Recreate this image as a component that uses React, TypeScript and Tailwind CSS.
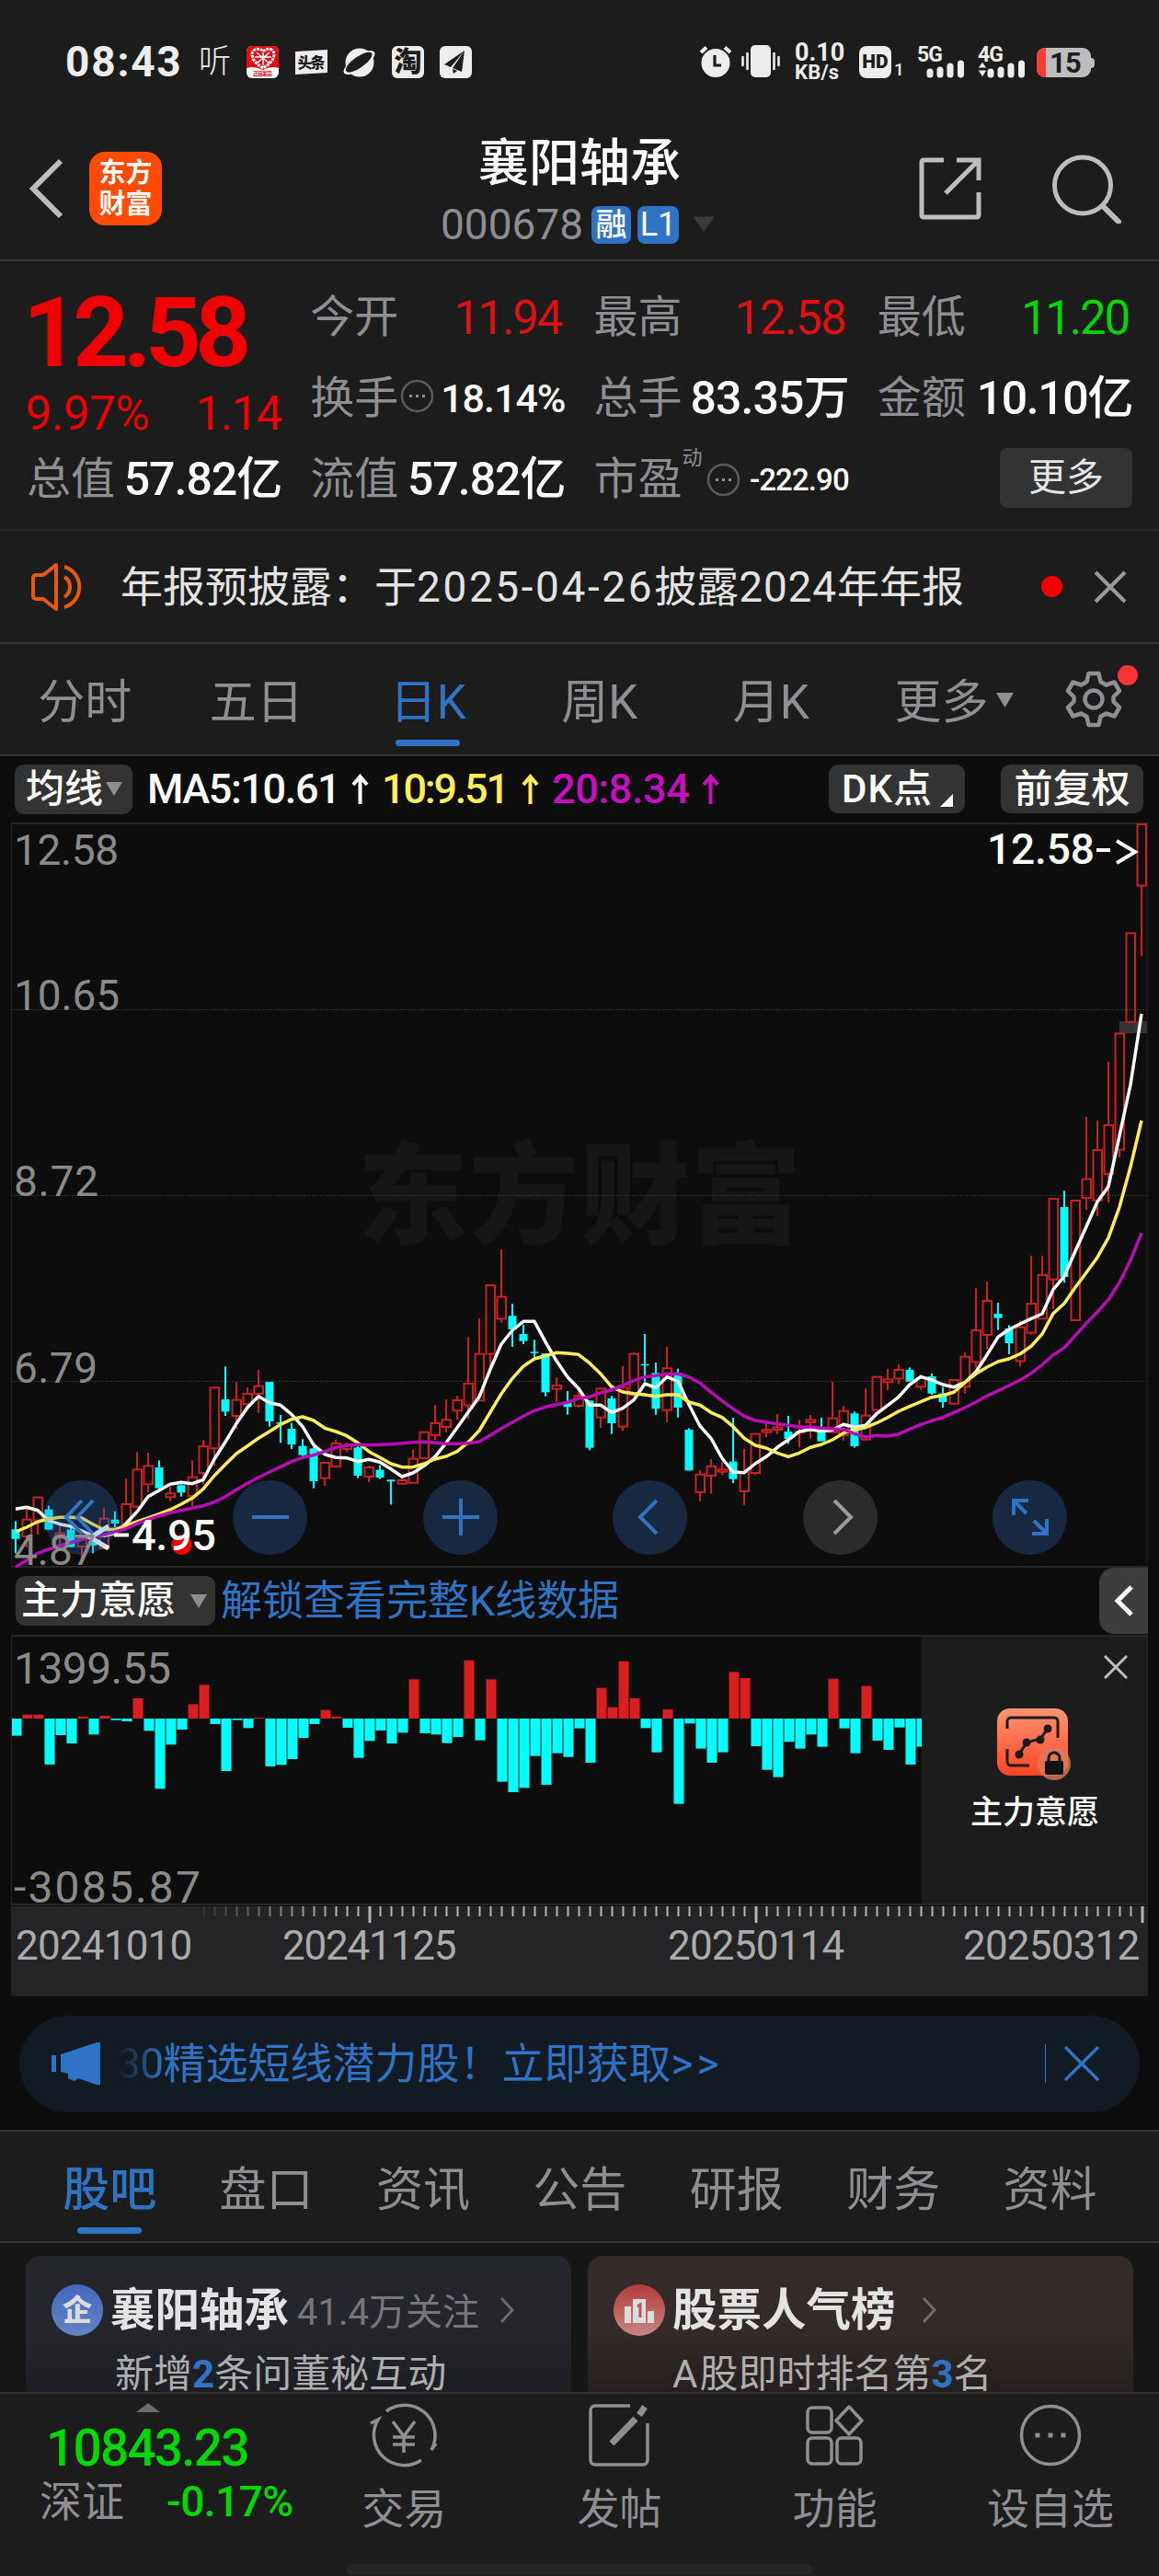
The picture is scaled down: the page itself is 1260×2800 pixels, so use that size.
import type { ReactNode } from "react";
import { clsx } from "clsx";

type Candle = [up: 0 | 1, top: number, bottom: number, high: number, low: number];

const STEP = 12;
const FIRST_X = 17;

// Candles and averages are stored in thirds of a pixel, measured from the 8.72 line
const toY = (v: number) => 406 + v / 3;
const toX = (i: number) => FIRST_X + i * STEP;

const candles: Candle[] = [
	[0, 1087, 1118, 1060, 1165], [1, 1055, 1110, 1015, 1145], [1, 983, 1058, 983, 1105], [0, 1022, 1088, 1010, 1088],
	[1, 1100, 1115, 1078, 1145], [0, 1088, 1145, 1080, 1145], [1, 1115, 1143, 1105, 1185], [0, 1128, 1140, 1115, 1165],
	[1, 1052, 1148, 1018, 1148], [0, 1055, 1068, 1028, 1080], [1, 1005, 1072, 922, 1072], [1, 892, 1013, 835, 1015],
	[1, 880, 940, 838, 965], [0, 885, 953, 862, 955], [1, 970, 982, 948, 995], [0, 943, 967, 940, 980],
	[1, 917, 978, 862, 1013], [1, 816, 903, 796, 940], [1, 625, 823, 622, 880], [0, 663, 703, 556, 717],
	[1, 665, 717, 607, 760], [1, 645, 678, 624, 700], [1, 620, 645, 567, 707], [0, 606, 735, 606, 752],
	[0, 738, 741, 714, 805], [0, 759, 810, 740, 825], [0, 815, 845, 793, 850], [0, 823, 930, 818, 953],
	[1, 870, 920, 870, 945], [1, 807, 882, 795, 885], [1, 812, 825, 805, 835], [0, 820, 912, 815, 920],
	[1, 885, 915, 880, 933], [0, 893, 918, 878, 923], [0, 925, 931, 925, 1006], [1, 927, 938, 910, 938],
	[1, 857, 935, 828, 937], [1, 770, 855, 770, 855], [1, 741, 780, 682, 795], [1, 730, 753, 663, 770],
	[1, 666, 700, 652, 730], [1, 612, 682, 460, 727], [1, 515, 667, 400, 667], [1, 291, 515, 290, 560],
	[1, 329, 400, 173, 413], [0, 391, 435, 352, 492], [0, 450, 473, 420, 483], [0, 508, 511, 469, 525],
	[0, 513, 640, 513, 653], [1, 618, 629, 592, 672], [0, 675, 688, 636, 713], [1, 651, 684, 640, 690],
	[0, 667, 821, 667, 829], [1, 628, 722, 628, 756], [0, 660, 741, 652, 776], [1, 625, 752, 554, 766],
	[1, 515, 650, 511, 650], [0, 548, 551, 450, 605], [0, 577, 694, 543, 713], [1, 562, 698, 491, 738],
	[0, 577, 690, 563, 722], [0, 762, 895, 757, 895], [1, 908, 966, 895, 995], [1, 882, 912, 858, 971],
	[1, 892, 899, 868, 910], [0, 866, 923, 723, 936], [1, 900, 963, 825, 1008], [1, 776, 903, 776, 910],
	[1, 763, 770, 742, 787], [1, 755, 762, 711, 776], [0, 768, 792, 717, 808], [1, 768, 772, 730, 820],
	[1, 730, 738, 714, 791], [0, 770, 800, 723, 800], [1, 725, 770, 607, 770], [1, 701, 780, 684, 797],
	[0, 709, 816, 703, 821], [1, 716, 794, 627, 794], [1, 590, 698, 590, 698], [1, 598, 607, 563, 634],
	[1, 567, 595, 550, 613], [0, 567, 605, 559, 605], [1, 595, 622, 583, 632], [0, 588, 644, 579, 648],
	[0, 644, 672, 622, 690], [1, 600, 677, 600, 677], [1, 524, 622, 510, 644], [1, 438, 541, 301, 560],
	[1, 342, 453, 280, 500], [0, 384, 398, 348, 437], [0, 432, 480, 421, 516], [1, 428, 538, 406, 556],
	[1, 351, 446, 195, 452], [1, 258, 400, 195, 400], [1, 9, 272, 9, 368], [0, 36, 264, -17, 283],
	[1, 15, 405, 15, 405], [1, -55, 6, -258, 46], [1, -150, 14, -246, 66], [1, -231, -72, -438, 22],
	[1, -530, -151, -530, -126], [1, -857, -568, -857, -568], [1, -1212, -1012, -1212, -782],
];

const ma5 = [
	1021, 1015, 1025, 1058, 1070, 1077, 1092, 1107, 1108, 1100, 1068, 1030, 980, 960, 940, 934, 938, 925, 858, 802,
	742, 690, 653, 674, 682, 712, 752, 812, 842, 853, 854, 866, 859, 868, 890, 915, 903, 880, 850, 805,
	755, 705, 655, 565, 483, 438, 409, 409, 476, 538, 590, 628, 682, 682, 706, 692, 665, 612, 625, 590,
	604, 680, 750, 790, 855, 900, 902, 873, 850, 820, 795, 768, 761, 767, 763, 745, 754, 748, 710, 683,
	655, 615, 589, 600, 615, 623, 608, 573, 518, 460, 435, 417, 400, 384, 305, 262, 180, 100, 19, -31,
	-196, -363, -594,
];

const ma10 = [
	1095, 1080, 1062, 1053, 1048, 1048, 1050, 1070, 1088, 1087, 1075, 1062, 1050, 1037, 1023, 1005, 985, 955, 912, 875,
	840, 815, 790, 768, 745, 728, 720, 732, 757, 768, 782, 805, 833, 853, 873, 884, 884, 873, 858, 849,
	833, 803, 765, 705, 645, 595, 555, 531, 521, 511, 513, 517, 545, 580, 622, 639, 644, 648, 653, 648,
	648, 672, 682, 706, 722, 752, 790, 813, 822, 838, 850, 838, 820, 810, 795, 773, 762, 755, 740, 722,
	702, 686, 671, 656, 650, 640, 608, 580, 558, 540, 531, 515, 490, 450, 383, 350, 298, 250, 200, 136,
	36, -95, -246,
];

const ma20 = [
	1210, 1188, 1165, 1152, 1140, 1130, 1120, 1112, 1105, 1095, 1085, 1068, 1055, 1043, 1033, 1025, 1018, 1010, 998, 980,
	958, 937, 918, 900, 883, 866, 853, 845, 833, 820, 813, 811, 812, 811, 809, 806, 803, 802, 805, 808,
	808, 806, 801, 780, 758, 738, 718, 700, 688, 680, 673, 660, 655, 642, 632, 618, 602, 590, 586, 580,
	580, 590, 610, 640, 668, 694, 718, 732, 737, 743, 747, 754, 752, 757, 759, 761, 775, 786, 781, 783,
	776, 760, 745, 733, 722, 706, 690, 672, 652, 635, 618, 600, 578, 550, 518, 495, 455, 415, 378, 338,
	282, 209, 121,
];

const flows = [
	-56, 13, 13, -150, -54, -81, 6, -52, 9, -5, -9, 66, -40, -229, -85, -36, 47, 110, -18, -171,
	-5, -31, 3, -156, -151, -132, -63, -18, 28, 6, -30, -128, -73, -39, -81, -46, 128, -48, -52, -80,
	-60, 190, -71, 128, -206, -240, -226, -122, -216, -113, -125, -32, -144, 100, 37, 187, 66, -31, -110, 30,
	-278, -16, -98, -144, -110, 152, 132, -90, -167, -191, -76, -98, -52, -92, 130, -32, -113, 106, -72, -102,
	-29, -150, -92,
];

const line = (values: number[]) => values.map((v, i) => `${toX(i)},${toY(v).toFixed(1)}`).join(" ");

function StatusBar() {
	return (
		<div className="flex h-[134px] items-center pl-[71px] pr-[70px] text-[#ededed]">
			<span className="w-[145px] text-[46px] leading-none font-bold tracking-[1.8px]">08:43</span>
			<span className="w-[52px] text-[35px] leading-none font-light">听</span>
			<svg width="35" height="35" viewBox="0 0 35 35" className="mr-[18px]">
				<rect width="35" height="35" rx="6" fill="#fff" />
				<path d="M0 24V6a6 6 0 0 1 6-6h23a6 6 0 0 1 6 6v18q-8-3-17.5 2Q8 21 0 24z" fill="#e60a14" />
				<path d="M18 24C10 19 6 14 6 9c0-6 8-8 12-3 4-5 12-3 12 3 0 5-4 10-12 15z" fill="none" stroke="#fff" strokeWidth="3" strokeDasharray="3 1" />
				<path d="M11 7l14 12M25 7L11 19M18 7v14M9 12h18" stroke="#fff" strokeWidth="1.6" />
				<text x="7" y="32" fontSize="6" fontWeight="700" fill="#e60a14" textLength="21">正品发货</text>
			</svg>
			<svg width="35" height="35" viewBox="0 0 35 35" className="mr-[17px]">
				<path d="M0 6l35-2v25L0 31z" fill="#ededed" />
				<text x="2.5" y="23.5" fontSize="16" fontWeight="900" fill="#1c1c1c" textLength="30">头条</text>
			</svg>
			<svg width="35" height="35" viewBox="0 0 35 35" className="mr-[18px]">
				<circle cx="18" cy="18" r="15.5" fill="#ededed" />
				<ellipse cx="17.500" cy="18" rx="20" ry="7.500" fill="#ededed" transform="rotate(-35 17.5 18)" />
				<ellipse cx="17.500" cy="17.500" rx="17" ry="6" fill="#1c1c1c" transform="rotate(-35 17.5 18)" />
			</svg>
			<span className="mr-[17px] flex size-[35px] items-center justify-center rounded-md bg-[#ededed] text-[30px] leading-none font-black text-[#1c1c1c]">淘</span>
			<svg width="35" height="35" viewBox="0 0 35 35">
				<rect width="35" height="35" rx="6" fill="#ededed" />
				<path d="M27 5L5 20l7 3zM27 5L14 24l10 4zM14 25l1 5 4-3z" fill="#1c1c1c" />
			</svg>
			<div className="ml-auto flex items-center">
				<svg width="36" height="36" viewBox="0 0 36 36" className="mr-[10px]">
					<circle cx="18" cy="19.500" r="15.500" fill="#ededed" />
					<path d="M2 8l6-5.500M34 8l-6-5.500" stroke="#ededed" strokeWidth="4" />
					<path d="M17 11v11h7" fill="none" stroke="#1c1c1c" strokeWidth="3.200" />
				</svg>
				<svg width="42" height="36" viewBox="0 0 42 36" className="mr-[16px]">
					<rect x="10" width="22" height="35" rx="5" fill="#ededed" />
					<path d="M1.500 13v9M6.500 9v17M35.500 9v17M40.500 13v9" stroke="#ededed" strokeWidth="2.600" strokeLinecap="round" />
				</svg>
				<div className="w-[70px] font-bold">
					<div className="text-[27px] leading-[22px]">0.10</div>
					<div className="text-[22px] leading-[21px] tracking-[0.2px]">KB/s</div>
				</div>
				<span className="flex h-[35px] w-[35px] items-center justify-center rounded-lg bg-[#ededed] text-[21px] leading-none font-black text-[#1c1c1c]">HD</span>
				<span className="mt-4 w-[28px] pl-[3px] text-[19px] leading-none font-medium">1</span>
				<Signal label="5G" />
				<Signal label="4G" arrows />
				<div className="flex items-center">
					<div className="mt-[2px] flex h-8 w-[59px] items-center rounded-[9px] bg-[#bdbdbd]">
						<div className="h-full w-[10px] rounded-l-[9px] bg-[#ff3b2f]" />
						<span className="pl-[4px] text-[31px] leading-none font-bold tracking-tight text-[#1c1c1c]">15</span>
					</div>
					<div className="mt-[2px] h-[11px] w-[4px] rounded-r bg-[#bdbdbd]" />
				</div>
			</div>
		</div>
	);
}

function Signal({ label, arrows }: { label: string; arrows?: boolean }) {
	return (
		<svg width="53" height="36" viewBox="0 0 53 36" className={clsx("overflow-visible", arrows ? "mr-[11px]" : "mr-[13px]")}>
			<text x="0" y="17.500" fontSize="23" fontWeight="700" fill="#ededed" textLength="28">{label}</text>
			<path d="M14 29v3M25 27v5M36 23v9M47.500 20v12" stroke="#ededed" strokeWidth="7" strokeLinecap="round" />
			{arrows && <path d="M0 25l5-7 5 7zM0 27h10l-5 8z" fill="#ededed" stroke="#1c1c1c" strokeWidth="1" />}
		</svg>
	);
}

function Header() {
	return (
		<header className="flex h-[150px] border-b-2 border-[#333] pl-[31px]">
			<svg width="40" height="68" viewBox="0 0 40 68" className="mt-[37px]">
				<path d="M35 4L5 34l30 30" fill="none" stroke="#bdbdbd" strokeWidth="6" />
			</svg>
			<div className="mt-[31px] ml-[26px] flex h-[80px] w-[79px] flex-col items-center justify-center rounded-[17px] bg-[#ff4a00] text-[29px] leading-[34px] font-bold text-white">
				<span>东方</span>
				<span>财富</span>
			</div>
			<div className="ml-[303px] flex w-[302px] flex-col">
				<h1 className="mt-[16px] self-center text-[55px] leading-none font-medium text-white">襄阳轴承</h1>
				<div className="mt-[18px] flex h-[42px] items-center">
					<span className="w-[164px] text-[46px] leading-none text-[#8e8e93]">000678</span>
					<span className="mr-[7px] flex h-[41px] w-[43px] items-center justify-center rounded-lg bg-[#2f74c4] text-[34px] leading-none font-medium text-white">融</span>
					<span className="flex h-[41px] w-[45px] items-center justify-center rounded-lg bg-[#2f74c4] text-[36px] leading-none text-white">L1</span>
					<svg width="26" height="18" viewBox="0 0 26 18" className="ml-[14px]">
						<path d="M2 1h22L13 16z" fill="#3a3a3a" stroke="#3a3a3a" strokeLinejoin="round" />
					</svg>
				</div>
			</div>
			<svg width="68" height="68" viewBox="0 0 68 68" className="mt-[37px] ml-[218px]" fill="none" stroke="#bdbdbd" strokeWidth="5">
				<path d="M27 3H5a2 2 0 0 0-2 2v58a2 2 0 0 0 2 2h58a2 2 0 0 0 2-2V38M41 3h24v22M65 3L29 39" />
			</svg>
			<svg width="76" height="76" viewBox="0 0 76 76" className="mt-[33px] ml-[77px]" fill="none" stroke="#bdbdbd" strokeWidth="5">
				<circle cx="33" cy="34.500" r="30.500" />
				<path d="M55 57l17 17" strokeWidth="6" strokeLinecap="round" />
			</svg>
		</header>
	);
}

function Hint({ className }: { className?: string }) {
	return (
		<svg width="37" height="37" viewBox="0 0 37 37" className={className}>
			<circle cx="18.500" cy="18.500" r="16.500" fill="none" stroke="#5c5c60" strokeWidth="2.500" />
			<path d="M10 18.500h3M17 18.500h3M24 18.500h3" stroke="#8e8e93" strokeWidth="3" />
		</svg>
	);
}

function Stat({ label, hint, children, className }: { label: string; hint?: ReactNode; children: ReactNode; className?: string }) {
	return (
		<div className="flex h-[88px] items-center whitespace-nowrap">
			<span className="text-[48px] leading-none text-[#8e8e93]">{label}</span>
			{hint}
			<span className={clsx("ml-auto leading-none", className)}>{children}</span>
		</div>
	);
}

function Quote() {
	return (
		<section className="grid h-[293px] auto-rows-[88px] grid-cols-4 content-start gap-x-[31px] border-b-2 border-[#262626] px-[29px] pt-[17px]">
			<div className="row-span-2 flex h-[176px] flex-col whitespace-nowrap text-[#f00000]">
				<span className="mt-[8px] ml-[-4px] text-[106px] leading-none font-bold tracking-[-6.5px]">12.58</span>
				<div className="mt-[9px] ml-[-1px] flex justify-between text-[51px] leading-none tracking-[-0.4px]">
					<span>9.97%</span>
					<span className="tracking-[-1.5px]">1.14</span>
				</div>
			</div>
			<Stat label="今开" className="pr-[4px] text-[51px] tracking-[-2.2px] text-[#e01010]">11.94</Stat>
			<Stat label="最高" className="pr-[3px] text-[51px] tracking-[-1.4px] text-[#e01010]">12.58</Stat>
			<Stat label="最低" className="pr-[4px] text-[51px] tracking-[-2.2px] text-[#00d800]">11.20</Stat>
			<Stat label="换手" hint={<Hint className="mb-[6px] ml-[2px]" />} className="text-[43px] font-medium tracking-[-1px] text-white">18.14%</Stat>
			<Stat label="总手" className="text-[50px] font-medium tracking-[-0.9px] text-white">83.35万</Stat>
			<Stat label="金额" className="text-[50px] font-medium tracking-[-1.4px] text-white">10.10亿</Stat>
			<Stat label="总值" className="text-[50px] font-medium tracking-[-1px] text-white">57.82亿</Stat>
			<Stat label="流值" className="text-[50px] font-medium tracking-[-1px] text-white">57.82亿</Stat>
			<Stat
				label="市盈"
				hint={
					<>
						<span className="mb-[46px] text-[22px] leading-none text-[#8e8e93]">动</span>
						<Hint className="ml-[4px]" />
					</>
				}
				className="text-[33px] font-medium tracking-[-0.9px] text-white"
			>
				-222.90
			</Stat>
			<div className="flex h-[88px] items-center justify-end">
				<button className="mt-[-4px] h-[65px] w-[144px] rounded-lg bg-[#333] text-[41px] leading-none text-[#e6e6e6]">更多</button>
			</div>
		</section>
	);
}

function Notice() {
	return (
		<section className="flex h-[123px] items-center border-b-2 border-[#333] pl-[33px]">
			<svg width="64" height="54" viewBox="0 0 64 54" className="mr-[34px]" fill="none" stroke="#e8590c" strokeWidth="4">
				<path d="M28 3v48L14 40H6a3 3 0 0 1-3-3V17a3 3 0 0 1 3-3h8z" strokeLinejoin="round" />
				<path d="M37 16a13 13 0 0 1 0 22M37 5a23 23 0 0 1 0 44" />
			</svg>
			<span className="w-[1001px] text-[46px] leading-none whitespace-nowrap text-[#e3e3e3]">
				年报预披露：于<span className="tracking-[2.6px]">2025-04-26</span>披露<span className="tracking-[0.8px]">2024</span>年年报
			</span>
			<span className="size-[23px] rounded-full bg-[#f00000]" />
			<svg width="36" height="36" viewBox="0 0 36 36" className="ml-[34px]">
				<path d="M2 2l32 32M34 2L2 34" stroke="#9a9a9a" strokeWidth="4" />
			</svg>
		</section>
	);
}

function PeriodTabs() {
	const tabs = ["分时", "五日", "日K", "周K", "月K"];
	return (
		<nav className="flex h-[122px] border-b-2 border-[#333]">
			{tabs.map((tab) => (
				<div
					key={tab}
					className={clsx("flex w-[186.500px] flex-col items-center pt-[38px] text-[51px] leading-none", tab === "日K" ? "text-[#2f74c4]" : "text-[#8e8e93]")}
				>
					<span className="mr-[2px]">{tab}</span>
					{tab === "日K" && <span className="mt-[15px] mr-[3px] h-[7px] w-[70px] rounded-full bg-[#2f74c4]" />}
				</div>
			))}
			<div className="flex w-[224px] items-start pt-[38px] pl-[40px] text-[51px] leading-none whitespace-nowrap text-[#8e8e93]">
				更多
				<svg width="19" height="16" viewBox="0 0 19 16" className="mt-[15px] ml-[8px]">
					<path d="M0 0h19L9.500 16z" fill="#8e8e93" />
				</svg>
			</div>
			<div className="relative mt-[28px] h-[64px] w-[64px]">
				<svg width="64" height="64" viewBox="0 0 64 64" fill="none" stroke="#8e8e93" strokeWidth="4.500" strokeLinejoin="round">
					<path d="M26.500 4h11l2 9 6 3.500 9-3 5.500 9.500-6.500 6.500v5l6.500 6.500-5.500 9.500-9-3-6 3.500-2 9h-11l-2-9-6-3.500-9 3L4 41l6.500-6.500v-5L4 23l5.500-9.500 9 3 6-3.500z" />
					<circle cx="32" cy="32" r="9.500" />
				</svg>
				<span className="absolute top-[-5px] left-[58px] size-[22px] rounded-full bg-[#fa3434]" />
			</div>
		</nav>
	);
}

function Rise({ color }: { color: string }) {
	return (
		<svg width="19" height="34" viewBox="0 0 19 34" fill="none" stroke={color} strokeWidth="4">
			<path d="M9.500 33V4M2 12l7.500-9 7.500 9" />
		</svg>
	);
}

function Averages() {
	return (
		<div className="flex h-[72px] items-center pl-[16px] text-[45px] leading-none whitespace-nowrap">
			<div className="flex h-[54px] w-[128px] items-center rounded-[10px] bg-[#333] pl-[12px] text-[42px] font-medium text-white">
				均线
				<svg width="18" height="15" viewBox="0 0 18 15" className="ml-[3px]">
					<path d="M0 0h18L9 15z" fill="#8e8e93" />
				</svg>
			</div>
			<span className="ml-[16px] w-[222px] font-medium tracking-[-1.4px] text-white">MA5:10.61</span>
			<Rise color="#fff" />
			<span className="ml-[14px] w-[152px] font-medium tracking-[-2.2px] text-[#ffee58]">10:9.51</span>
			<Rise color="#ffee58" />
			<span className="ml-[14px] w-[163px] font-medium tracking-[-0.4px] text-[#c80fc0]">20:8.34</span>
			<Rise color="#c80fc0" />
			<div className="ml-[119px] flex h-[53px] w-[148px] items-center rounded-[10px] bg-[#333] pl-[14px] text-[42px] font-medium text-white">
				<span className="tracking-[1px]">DK点</span>
				<svg width="14" height="14" viewBox="0 0 14 14" className="mt-[24px] ml-[8px]">
					<path d="M14 0v14H0z" fill="#fff" />
				</svg>
			</div>
			<div className="ml-[39px] flex h-[53px] w-[155px] items-center justify-center rounded-[10px] bg-[#333] text-[42px] font-medium text-white">前复权</div>
		</div>
	);
}

function RoundButton({ muted, className, children }: { muted?: boolean; className?: string; children: ReactNode }) {
	return (
		<button className={clsx("flex size-[81px] items-center justify-center rounded-full", muted ? "bg-[#2b2b2b]" : "bg-[#2f74c4]/28", className)}>
			<svg width="48" height="48" viewBox="0 0 48 48" fill="none" stroke={muted ? "#9a9a9a" : "#2f74c4"} strokeWidth="4">
				{children}
			</svg>
		</button>
	);
}

function KLine() {
	const labels = [
		{ text: "12.58", y: 46, w: 114 },
		{ text: "10.65", y: 204, w: 115 },
		{ text: "8.72", y: 406, w: 92 },
		{ text: "6.79", y: 609, w: 91 },
	];
	return (
		<div className="relative h-[810px]">
			<svg width="1260" height="810" viewBox="0 0 1260 810" className="block">
				<text x="389" y="449" fontSize="120" fontWeight="900" fill="#161616" textLength="482">东方财富</text>
				<path d="M12.500 1v808M1247 1v808" stroke="#222" />
				<path d="M12 1h1236M12 809h1236" stroke="#262626" strokeWidth="2" />
				<path d="M12 203.500h1236M12 405.500h1236M12 607.500h1236" stroke="#303030" strokeDasharray="2 1" />
				<rect x="1217" y="216" width="30" height="13" fill="#333" />
				{candles.map(([up, top, bottom, high, low], i) => {
					const x = toX(i);
					const y = toY(top);
					const h = (bottom - top) / 3;
					if (!up) {
						return (
							<g key={i} fill="#00ffff">
								<rect x={x - 1} y={toY(high)} width="2" height={(low - high) / 3} />
								<rect x={x - 4.5} y={y} width="9" height={Math.max(h, 1.5)} />
							</g>
						);
					}
					return (
						<g key={i} stroke="#cc1f1f" strokeWidth="2" fill="none">
							{high < top && <path d={`M${x} ${toY(high)}V${y}`} />}
							{low > bottom && <path d={`M${x} ${toY(bottom)}V${toY(low)}`} />}
							<rect x={x - 4.5} y={y} width="9.500" height={h} />
						</g>
					);
				})}
				<polyline points={line(ma5)} fill="none" stroke="#fff" strokeWidth="3.500" strokeLinejoin="round" />
				<polyline points={line(ma10)} fill="none" stroke="#ffee58" strokeWidth="3.500" strokeLinejoin="round" />
				<polyline points={line(ma20)} fill="none" stroke="#b80cb4" strokeWidth="3.500" strokeLinejoin="round" />
				<circle cx="197.500" cy="785" r="11" fill="#f00000" />
				<path d="M118 765l-20 12 20 12" fill="none" stroke="#fff" strokeWidth="5" />
				<path d="M124 774.500h16" stroke="#fff" strokeWidth="4" />
				<text x="143" y="791" fontSize="47" fontWeight="500" fill="#fff" textLength="92">4.95</text>
				<text x="1073" y="45" fontSize="46" fontWeight="500" fill="#fff" textLength="117">12.58</text>
				<path d="M1192 30h15M1214 20l20 12-20 12" fill="none" stroke="#fff" strokeWidth="4" />
				{labels.map((label) => (
					<text key={label.text} x="15" y={label.y} fontSize="46" fill="#8a8a8a" textLength={label.w}>{label.text}</text>
				))}
			</svg>
			<div className="absolute top-[715px] left-[48px] flex">
				<RoundButton><path d="M24 6L7 24l17 18M36 6L19 24l17 18" /></RoundButton>
				<RoundButton className="ml-[124px]"><path d="M4 24h40" /></RoundButton>
				<RoundButton className="ml-[126px]"><path d="M4 24h40M24 4v40" /></RoundButton>
				<RoundButton className="ml-[125px]"><path d="M31 6L13 24l18 18" /></RoundButton>
				<RoundButton muted className="ml-[126px]"><path d="M17 6l18 18-18 18" /></RoundButton>
				<RoundButton className="ml-[125px]"><path d="M6 22V6h16M6 6l14 14M42 26v16H26M42 42L28 28" /></RoundButton>
			</div>
			<span className="absolute top-[768px] left-[15px] text-[46px] leading-none text-[#8a8a8a]">4.87</span>
		</div>
	);
}

function IndicatorBar() {
	return (
		<div className="flex h-[73px] items-center pl-[17px]">
			<div className="flex h-[54px] w-[217px] items-center rounded-[10px] bg-[#333] pl-[6px] text-[42px] leading-none font-medium whitespace-nowrap text-white">
				主力意愿
				<svg width="18" height="15" viewBox="0 0 18 15" className="ml-[16px]">
					<path d="M0 0h18L9 15z" fill="#8e8e93" />
				</svg>
			</div>
			<span className="ml-[6px] text-[45px] leading-none text-[#2f74c4]">解锁查看完整K线数据</span>
			<button className="mr-[12px] ml-auto flex h-[72px] w-[53px] items-center justify-center rounded-l-[16px] bg-[#3d3d3d]">
				<svg width="22" height="36" viewBox="0 0 22 36">
					<path d="M19 3L4 18l15 15" fill="none" stroke="#fff" strokeWidth="5" />
				</svg>
			</button>
		</div>
	);
}

function Intent() {
	return (
		<div className="mx-[12px] flex h-[294px] border-x border-t-2 border-b-2 border-[#262626]">
			<svg width="989" height="290" viewBox="13 1779 989 290" className="block">
				{flows.map((v, i) => (
					<rect
						key={i}
						x={12.5 + i * STEP}
						y={v > 0 ? 1868 - v / 3 : 1868}
						width="11"
						height={Math.max(Math.abs(v) / 3, 1)}
						fill={v > 0 ? "#d81e1e" : "#00ffff"}
					/>
				))}
				<text x="15" y="1830" fontSize="48" fill="#8a8a8a" textLength="171">1399.55</text>
				<text x="15" y="2068" fontSize="48" fill="#8a8a8a" textLength="203">-3085.87</text>
			</svg>
			<div className="relative flex w-[245px] flex-col items-center bg-[#1c1c1c] pt-[78px] pl-[1px]">
				<svg width="26" height="26" viewBox="0 0 26 26" className="absolute top-[20px] right-[21px]">
					<path d="M1 1l24 24M25 1L1 25" stroke="#bdbdbd" strokeWidth="3" />
				</svg>
				<svg width="82" height="78" viewBox="0 0 82 78">
					<defs>
						<linearGradient id="tile" x1="0" y1="0" x2="0" y2="1">
							<stop offset="0" stopColor="#ff9470" />
							<stop offset="1" stopColor="#ff4526" />
						</linearGradient>
					</defs>
					<rect width="77" height="73" rx="14" fill="url(#tile)" />
					<path d="M11 22v-8a4 4 0 0 1 4-4h47a4 4 0 0 1 4 4v18M11 44v14a4 4 0 0 0 4 4h20" fill="none" stroke="#1c1c1c" strokeWidth="3" />
					<path d="M24 50l8-13 15-4 8-11" fill="none" stroke="#1c1c1c" strokeWidth="3" />
					<g fill="#1c1c1c">
						<circle cx="24" cy="50" r="4.500" />
						<circle cx="32" cy="37" r="4.500" />
						<circle cx="47" cy="34" r="4.500" />
						<circle cx="55" cy="22" r="4.500" />
					</g>
					<circle cx="62" cy="60" r="18" fill="#d97b5c" opacity=".8" />
					<rect x="52" y="57" width="20" height="15" rx="2" fill="#111" />
					<path d="M56 58v-4a6 6 0 0 1 12 0v4" fill="none" stroke="#111" strokeWidth="3" />
				</svg>
				<span className="mt-[18px] text-[35px] leading-none font-medium text-white">主力意愿</span>
			</div>
		</div>
	);
}

function TimeAxis() {
	const ticks = Array.from({ length: 86 }, (_, k) => k + 17);
	return (
		<div className="mx-[12px] mt-px h-[98px] bg-[#242426] text-[44px] leading-none text-[#ababab]">
			<svg width="1236" height="18" viewBox="12 0 1236 18" className="block">
				{ticks.map((i) => {
					const major = i === 32 || i === 67 || i === 102;
					return <rect key={i} x={toX(i) - 0.5} y="0" width={major ? 3 : 2} height={major ? 18 : 11} fill="#b5b5b5" opacity={Math.min(1, (i - 15) / 14)} />;
				})}
			</svg>
			<div className="mt-[3px] flex tracking-[-0.8px]">
				<span className="w-[289px] pl-[5px]">20241010</span>
				<span className="w-[419px] pl-[6px] tracking-[-1.2px]">20241125</span>
				<span className="w-[321px] pl-[6px]">20250114</span>
				<span className="pl-[6px]">20250312</span>
			</div>
		</div>
	);
}

function Promo() {
	return (
		<div className="mx-[21px] mt-[21px] flex h-[105px] items-center rounded-full bg-[#121a23] pl-[35px] text-[#2f74c4]">
			<svg width="53" height="46" viewBox="0 0 53 46" fill="currentColor" className="mr-[18px]">
				<path d="M0 14h5v18H0zM10 13L49 0h4v46h-4l-20-7-4 3-7-3v-5l-8-2z" />
			</svg>
			<span className="text-[46px] leading-none whitespace-nowrap">
				<span className="bg-linear-to-r from-[#121a23] to-[#2f74c4] bg-clip-text tracking-[-0.6px] text-transparent">30</span>精选短线潜力股！立即获取<span className="tracking-[4px]">&gt;&gt;</span>
			</span>
			<span className="ml-auto h-[42px] w-px bg-[#2f74c4]" />
			<svg width="38" height="38" viewBox="0 0 38 38" className="mr-[44px] ml-[20px]">
				<path d="M1 1l36 36M37 1L1 37" stroke="currentColor" strokeWidth="3.500" />
			</svg>
		</div>
	);
}

function SectionTabs() {
	const tabs = ["股吧", "盘口", "资讯", "公告", "研报", "财务", "资料"];
	return (
		<nav className="mt-[19px] flex h-[124px] border-y-2 border-[#333] bg-[#1c1c1c] pl-[34px]">
			{tabs.map((tab, i) => (
				<div key={tab} className={clsx("flex w-[170.400px] flex-col items-center pt-[38px] text-[51px] leading-none", i === 0 ? "font-medium text-[#2f74c4]" : "text-[#8e8e93]")}>
					{tab}
					{i === 0 && <span className="mt-[15px] h-[7px] w-[70px] rounded-full bg-[#2f74c4]" />}
				</div>
			))}
		</nav>
	);
}

function Chevron() {
	return (
		<svg width="16" height="28" viewBox="0 0 16 28" className="ml-[22px]">
			<path d="M2 1l12 13L2 27" fill="none" stroke="#6c6c70" strokeWidth="3" />
		</svg>
	);
}

function Cards() {
	return (
		<div className="flex h-[162px] gap-[18px] overflow-hidden bg-[#161616] px-[28px] pt-[14px]">
			<div className="h-[180px] w-[593px] rounded-[16px] bg-linear-to-b from-[#24262c] from-45% to-[#191a1e] pt-[31px] pl-[28px] whitespace-nowrap">
				<div className="flex h-[56px] items-center">
					<span className="flex size-[56px] items-center justify-center rounded-full bg-linear-to-b from-[#4468c0] to-[#6484c0] text-[32px] leading-none font-black text-[#dcdcdc]">企</span>
					<span className="mt-[2px] ml-[8px] text-[48.500px] leading-none font-bold text-[#e3e3e3]">襄阳轴承</span>
					<span className="mt-[6px] ml-[9px] text-[40px] leading-none text-[#77777b]">41.4万关注</span>
					<Chevron />
				</div>
				<div className="mt-[21px] ml-[69px] text-[42px] leading-none text-[#aeaeae]">
					新增<b className="font-bold text-[#2f74c4]">2</b>条问董秘互动
				</div>
			</div>
			<div className="h-[180px] w-[593px] rounded-[16px] bg-linear-to-b from-[#342a29] from-45% to-[#1e1a1a] pt-[31px] pl-[28px] whitespace-nowrap">
				<div className="flex h-[56px] items-center">
					<svg width="56" height="56" viewBox="0 0 56 56">
						<defs>
							<linearGradient id="rank" x1="0" y1="0" x2="0" y2="1">
								<stop offset="0" stopColor="#b23c3a" />
								<stop offset="1" stopColor="#c88682" />
							</linearGradient>
						</defs>
						<circle cx="28" cy="28" r="28" fill="url(#rank)" />
						<path d="M12 24h7v18h-7zM21 16h14v26H21zM37 29h7v13h-7z" fill="#dcdcdc" />
						<path d="M26 24l3-2v14" fill="none" stroke="#b85854" strokeWidth="3" />
					</svg>
					<span className="mt-[2px] ml-[8px] text-[48.500px] leading-none font-bold text-[#e3e3e3]">股票人气榜</span>
					<span className="w-[6px]" />
					<Chevron />
				</div>
				<div className="mt-[21px] ml-[64px] text-[42px] leading-none text-[#aeaeae]">
					<span className="tracking-[2px]">A</span>股即时排名第<b className="font-bold text-[#2f74c4]">3</b>名
				</div>
			</div>
		</div>
	);
}

function NavItem({ label, children }: { label: string; children: ReactNode }) {
	return (
		<div className="flex w-[234.300px] flex-col items-center pt-[10px]">
			<svg width="76" height="70" viewBox="0 0 76 70" fill="none" stroke="#8e8e93" strokeWidth="3.500">
				{children}
			</svg>
			<span className="mt-[22px] text-[46px] leading-none text-[#8e8e93]">{label}</span>
		</div>
	);
}

function BottomNav() {
	return (
		<footer className="relative flex h-[200px] border-t-2 border-[#333] bg-[#1c1c1c]">
			<div className="flex w-[322px] flex-col whitespace-nowrap">
				<svg width="26" height="10" viewBox="0 0 26 10" className="mt-[10px] ml-[148px]">
					<path d="M13 0l13 10H0z" fill="#6c6c70" />
				</svg>
				<span className="mt-[12px] ml-[50px] text-[55px] leading-none font-medium tracking-[-1.800px] text-[#00d800]">10843.23</span>
				<div className="mt-[7px] flex items-center pl-[43px] leading-none">
					<span className="w-[138px] text-[46px] text-[#8e8e93]">深证</span>
					<span className="text-[46px] font-medium tracking-[-0.500px] text-[#00d800]">-0.17%</span>
				</div>
			</div>
			<NavItem label="交易">
				<path d="M19 9a33 33 0 0 1 49 42l5-7M57 62A33 33 0 0 1 10 18l-8 4" />
				<path d="M26 20l12 16 12-16M38 36v18M26 37h24M26 45h24" />
			</NavItem>
			<NavItem label="发帖">
				<path d="M50 3H12a5 5 0 0 0-5 5v54a5 5 0 0 0 5 5h52a5 5 0 0 0 5-5V22" />
				<path d="M66 4L60 13M56 17L30 44" strokeWidth="7" />
			</NavItem>
			<NavItem label="功能">
				<rect x="8" y="5" width="26" height="27" rx="5" />
				<rect x="8" y="38" width="26" height="28" rx="5" />
				<rect x="40" y="38" width="26" height="28" rx="5" />
				<path d="M53 4l14 15-14 15-14-15z" strokeLinejoin="round" />
			</NavItem>
			<NavItem label="设自选">
				<circle cx="38" cy="35" r="31.500" />
				<path d="M21.500 35h5M35.500 35h5M49.500 35h5" strokeWidth="5" />
			</NavItem>
			<span className="absolute top-[185px] left-[377px] h-[12px] w-[506px] rounded-full bg-[#262626]" />
		</footer>
	);
}

export default function App() {
	return (
		<div className="flex h-[2800px] w-[1260px] flex-col overflow-hidden bg-[#0d0d0d] font-['Roboto','Noto_Sans_CJK_SC',sans-serif]">
			<div className="bg-[#1c1c1c]">
				<StatusBar />
				<Header />
				<Quote />
				<Notice />
				<PeriodTabs />
			</div>
			<Averages />
			<KLine />
			<IndicatorBar />
			<Intent />
			<TimeAxis />
			<Promo />
			<SectionTabs />
			<Cards />
			<BottomNav />
		</div>
	);
}
